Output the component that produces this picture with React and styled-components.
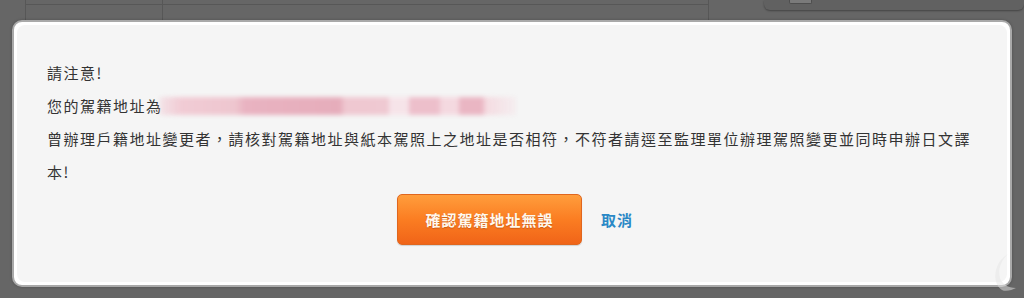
import React from 'react'
import styled, { createGlobalStyle } from 'styled-components'

const GlobalStyle = createGlobalStyle`
  html, body {
    margin: 0;
    padding: 0;
    background: #666666;
  }
  body {
    font-family: "Noto Sans CJK TC", "Noto Sans", sans-serif;
  }
`

const Page = styled.div`
  position: relative;
  width: 1024px;
  height: 298px;
  overflow: hidden;
  background: #666666;
`

const Behind = styled.div`
  display: flex;
  height: 40px;
  padding-left: 25px;
`

const Table = styled.div`
  display: grid;
  grid-template-columns: 137px 545px;
  grid-template-rows: 5px 35px;
  width: 682px;
  border-left: 1px solid #575757;
  border-right: 1px solid #575757;
`

const Cell = styled.div`
  border-right: ${p => (p.$last ? 'none' : '1px solid #575757')};
  border-bottom: ${p => (p.$head ? '1px solid #575757' : 'none')};
`

const SidePanel = styled.div`
  margin-left: 55px;
  width: 254px;
  height: 10px;
  background: #616161;
  border-radius: 0 0 6px 6px;
  box-shadow: 0 1px 2px rgba(0, 0, 0, 0.35);
  padding-left: 25px;
`

const Check = styled.div`
  width: 21px;
  height: 3px;
  border: 1px solid #4e4e4e;
  border-top: none;
  background: #7a7a7a;
  border-radius: 0 0 2px 2px;
`

const Dialog = styled.div`
  position: absolute;
  left: 12px;
  top: 20px;
  width: 1000px;
  height: 267px;
  box-sizing: border-box;
  background: #ffffff;
  border: 2px solid #a9a9a9;
  border-radius: 10px;
  padding: 3px;
  box-shadow: 0 0 3px rgba(0, 0, 0, 0.25);
`

const Inner = styled.div`
  height: 100%;
  box-sizing: border-box;
  background: #f5f5f5;
  border-radius: 8px;
  padding: 31px 30px 0 30px;
  display: flex;
  flex-direction: column;
`

const Message = styled.div`
  color: #333333;
  font-size: 15px;
  letter-spacing: 1.5px;
  line-height: 33px;
`

const Line = styled.div``

const Censor = styled.span`
  display: inline-block;
  vertical-align: middle;
  width: 356px;
  height: 18px;
  margin-top: -3px;
  margin-left: -3px;
  filter: blur(2px);
  background: linear-gradient(
    90deg,
    rgba(240, 200, 210, 0.4) 0px,
    #f1ccd5 20px,
    #eec6cf 75px,
    #e9b3c1 85px,
    #e6adbb 180px,
    #efc8d1 185px,
    #efc9d2 228px,
    #f6e4e9 230px,
    #f6e4e9 248px,
    #edbfcb 250px,
    #edbfcb 278px,
    #f4d9e0 282px,
    #f4d9e0 298px,
    #eab6c3 300px,
    #eab6c3 322px,
    #f4dbe1 326px,
    rgba(245, 223, 229, 0.3) 356px
  );
`

const Actions = styled.div`
  margin-top: 6px;
  display: flex;
  align-items: center;
  justify-content: center;
  gap: 19px;
  padding-left: 6px;
`

const ConfirmButton = styled.button`
  width: 185px;
  height: 51px;
  border: 1px solid #e0661e;
  border-radius: 5px;
  background: linear-gradient(180deg, #ff9d3c 0%, #fb7d22 50%, #f06418 100%);
  color: #fff8ee;
  font-family: "Noto Sans CJK TC", "Noto Sans", sans-serif;
  font-size: 15px;
  font-weight: 700;
  letter-spacing: 1px;
  text-shadow: 0 1px 1px rgba(150, 60, 0, 0.45);
  box-shadow: 0 1px 1px rgba(0, 0, 0, 0.15);
  cursor: pointer;
`

const CancelLink = styled.a`
  color: #2a88c6;
  font-size: 15px;
  font-weight: 700;
  letter-spacing: 1px;
  text-decoration: none;
  cursor: pointer;
`

const Watermark = styled.svg`
  position: absolute;
  right: 4px;
  bottom: 4px;
  opacity: 0.5;
`

export default function App() {
  return (
    <Page>
      <GlobalStyle />
      <Behind>
        <Table>
          <Cell $head />
          <Cell $head $last />
          <Cell />
          <Cell $last />
        </Table>
        <SidePanel>
          <Check />
        </SidePanel>
      </Behind>
      <Dialog>
        <Inner>
          <Message>
            <Line>請注意!</Line>
            <Line>
              您的駕籍地址為<Censor />
            </Line>
            <Line>
              曾辦理戶籍地址變更者，請核對駕籍地址與紙本駕照上之地址是否相符，不符者請逕至監理單位辦理駕照變更並同時申辦日文譯本!
            </Line>
          </Message>
          <Actions>
            <ConfirmButton>確認駕籍地址無誤</ConfirmButton>
            <CancelLink>取消</CancelLink>
          </Actions>
        </Inner>
      </Dialog>
      <Watermark width="30" height="42" viewBox="0 0 30 42">
        <path d="M18 2 C10 10 8 18 10 26 C12 32 18 36 26 36 C22 38 16 40 12 38 C6 34 4 26 6 18 C8 10 12 6 18 2 Z" fill="#e6e6e6" />
      </Watermark>
    </Page>
  )
}
